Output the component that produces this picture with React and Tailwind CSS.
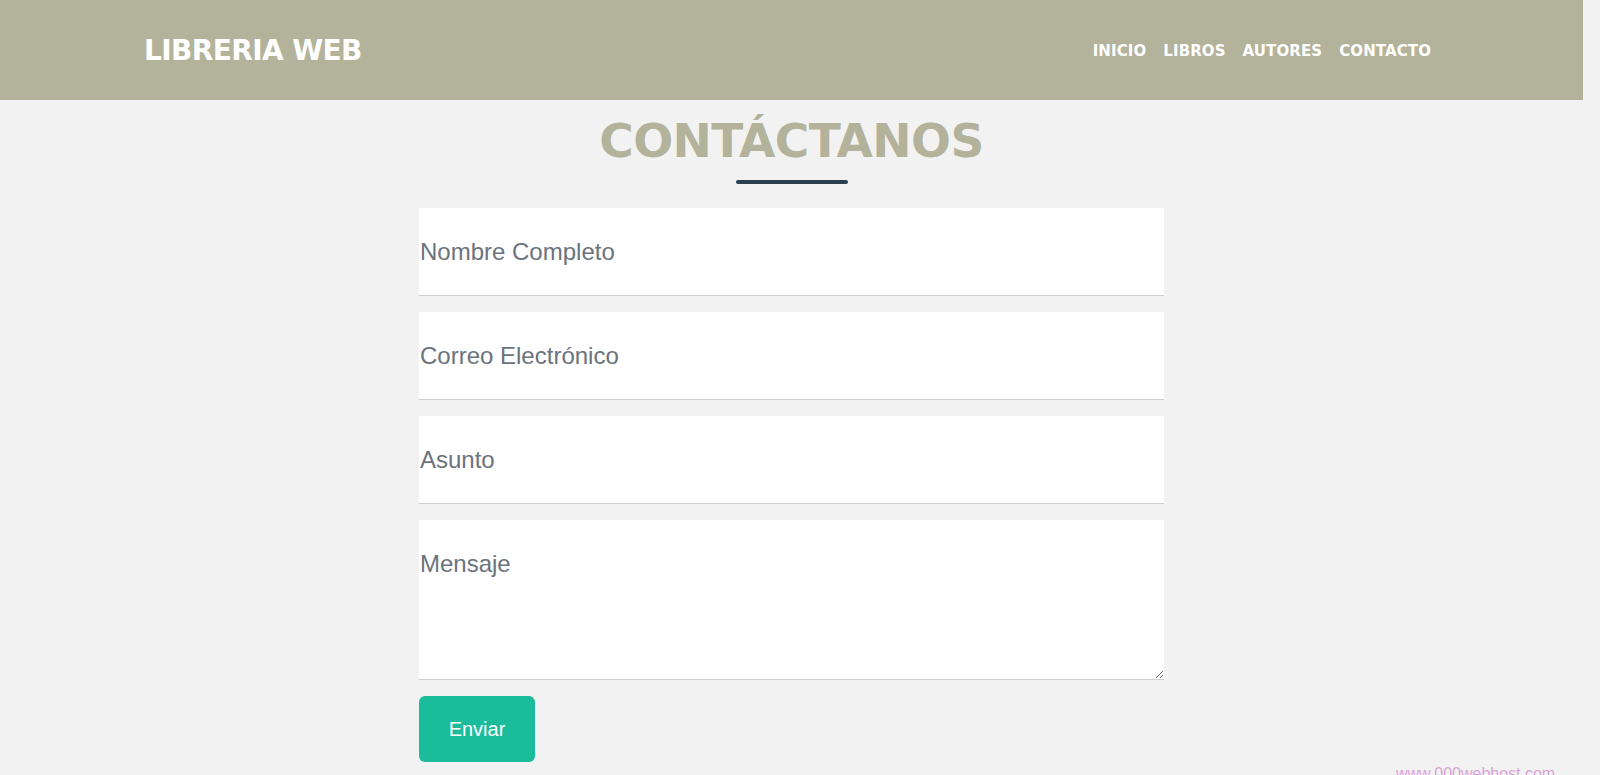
export default function App() {
  const inputCls =
    "block w-full h-[88px] bg-white border-0 border-b border-[#cfcfcf] pl-[1px] pr-0 text-[24px] text-[#495057] placeholder:text-[#6b737c] outline-none font-['Liberation_Sans',Arial,sans-serif]";
  return (
    <div className="relative w-[1600px] h-[775px] overflow-hidden bg-[#f2f2f2]">
      <div className="w-[1583px]">
        <header className="h-[100px] pt-[2px] bg-[#b3b29a] flex items-center justify-between pl-[144px] pr-[152px] text-white font-['DejaVu_Sans',sans-serif] font-bold">
          <div className="text-[28px] tracking-[-0.6px] leading-none">LIBRERIA WEB</div>
          <nav className="flex gap-[17px] text-[15px] tracking-[0.1px] leading-none">
            <a>INICIO</a>
            <a>LIBROS</a>
            <a>AUTORES</a>
            <a>CONTACTO</a>
          </nav>
        </header>
        <main className="flex flex-col items-center">
          <h1 className="mt-[13px] text-[47px] leading-[55px] tracking-[-0.6px] font-bold text-[#b3b29a] font-['DejaVu_Sans',sans-serif]">
            CONTÁCTANOS
          </h1>
          <div className="mt-[12px] w-[112px] h-[4px] rounded-full bg-[#2c3e50]" />
          <form className="mt-[24px] w-[745px] flex flex-col gap-[16px]" onSubmit={(e) => e.preventDefault()}>
            <input className={inputCls} placeholder="Nombre Completo" />
            <input className={inputCls} placeholder="Correo Electrónico" />
            <input className={inputCls} placeholder="Asunto" />
            <textarea
              className="block w-full h-[160px] bg-white border-0 border-b border-[#cfcfcf] pl-[1px] pr-0 pt-[26px] text-[24px] text-[#495057] placeholder:text-[#6b737c] outline-none font-['Liberation_Sans',Arial,sans-serif]"
              placeholder="Mensaje"
            />
            <div>
              <button
                type="submit"
                className="w-[116px] h-[66px] rounded-[6px] bg-[#1abc9c] text-white text-[20px] font-['Liberation_Sans',Arial,sans-serif]"
              >
                Enviar
              </button>
            </div>
          </form>
        </main>
      </div>
      <div className="absolute left-[1396px] top-[765px] text-[16px] leading-[18px] text-[#d9a3d6] font-['Liberation_Sans',Arial,sans-serif]">
        www.000webhost.com
      </div>
    </div>
  );
}
